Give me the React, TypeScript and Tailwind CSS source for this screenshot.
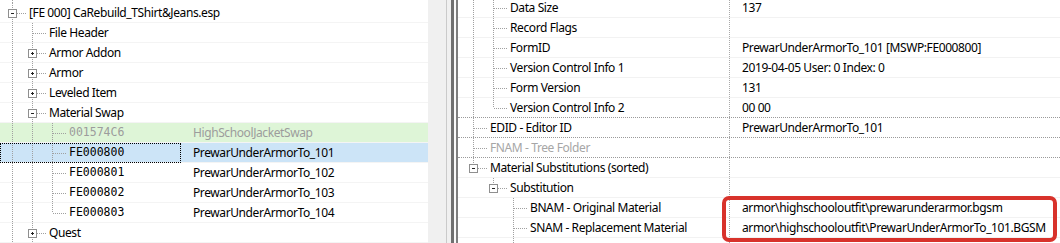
import React from "react";

type Exp = "plus" | "minus" | null;

type Row = {
  lv: number;
  anc: boolean[];
  last?: boolean;
  exp?: Exp;
  name: string;
  value?: string;
  mono?: boolean;
  muted?: boolean;
  tone?: "injected" | "selected";
  line?: "dotted" | "faint";
};

const DOT = "#a0a0a0";

function Guides({ base, row }: { base: number; row: Row }) {
  const cx = (l: number) => base + 20 * l;
  const mid = 10;
  const x = cx(row.lv);
  return (
    <svg width={x + 17} height={20} className="shrink-0" shapeRendering="crispEdges">
      {row.anc.map((on, a) =>
        on ? (
          <line key={a} x1={cx(a) + 0.5} y1={0} x2={cx(a) + 0.5} y2={20} stroke={DOT} strokeDasharray="1 1" />
        ) : null
      )}
      <line x1={x + 0.5} y1={0} x2={x + 0.5} y2={row.last ? mid : 20} stroke={DOT} strokeDasharray="1 1" />
      <line x1={x + 1} y1={mid + 0.5} x2={x + 14} y2={mid + 0.5} stroke={DOT} strokeDasharray="1 1" />
      {row.exp && (
        <g>
          <rect x={x - 3.5} y={mid - 3.5} width={8} height={8} fill="#fff" stroke="#8f8f8f" />
          <line x1={x - 1} y1={mid + 0.5} x2={x + 2} y2={mid + 0.5} stroke="#222" />
          {row.exp === "plus" && <line x1={x + 0.5} y1={mid - 1} x2={x + 0.5} y2={mid + 2} stroke="#222" />}
        </g>
      )}
    </svg>
  );
}

const left: Row[] = [
  { lv: 0, anc: [], exp: "minus", name: "[FE 000] CaRebuild_TShirt&Jeans.esp" },
  { lv: 1, anc: [true], name: "File Header" },
  { lv: 1, anc: [true], exp: "plus", name: "Armor Addon" },
  { lv: 1, anc: [true], exp: "plus", name: "Armor" },
  { lv: 1, anc: [true], exp: "plus", name: "Leveled Item" },
  { lv: 1, anc: [true], exp: "minus", name: "Material Swap" },
  { lv: 2, anc: [true, true], name: "001574C6", value: "HighSchoolJacketSwap", mono: true, muted: true, tone: "injected" },
  { lv: 2, anc: [true, true], name: "FE000800", value: "PrewarUnderArmorTo_101", mono: true, tone: "selected" },
  { lv: 2, anc: [true, true], name: "FE000801", value: "PrewarUnderArmorTo_102", mono: true },
  { lv: 2, anc: [true, true], name: "FE000802", value: "PrewarUnderArmorTo_103", mono: true },
  { lv: 2, anc: [true, true], last: true, name: "FE000803", value: "PrewarUnderArmorTo_104", mono: true },
  { lv: 1, anc: [true], exp: "plus", name: "Quest" },
];

const right: Row[] = [
  { lv: 1, anc: [true], name: "Data Size", value: "137" },
  { lv: 1, anc: [true], name: "Record Flags", value: "" },
  { lv: 1, anc: [true], name: "FormID", value: "PrewarUnderArmorTo_101 [MSWP:FE000800]" },
  { lv: 1, anc: [true], name: "Version Control Info 1", value: "2019-04-05 User: 0 Index: 0" },
  { lv: 1, anc: [true], name: "Form Version", value: "131" },
  { lv: 1, anc: [true], last: true, name: "Version Control Info 2", value: "00 00", line: "dotted" },
  { lv: 0, anc: [], name: "EDID - Editor ID", value: "PrewarUnderArmorTo_101", line: "dotted" },
  { lv: 0, anc: [], name: "FNAM - Tree Folder", value: "", muted: true, line: "dotted" },
  { lv: 0, anc: [], last: true, exp: "minus", name: "Material Substitutions (sorted)" },
  { lv: 1, anc: [false], last: true, exp: "minus", name: "Substitution" },
  { lv: 2, anc: [false, false], name: "BNAM - Original Material", value: "armor\\highschooloutfit\\prewarunderarmor.bgsm" },
  { lv: 2, anc: [false, false], name: "SNAM - Replacement Material", value: "armor\\highschooloutfit\\PrewarUnderArmorTo_101.BGSM" },
  { lv: 2, anc: [false, false], name: "", value: "" },
];

const sans = "font-['Noto_Sans',sans-serif] text-[12px] tracking-[-0.4px]";
const mono = "font-['DejaVu_Sans_Mono',monospace] text-[11.5px]";

function LeftRow({ row }: { row: Row }) {
  const bg =
    row.tone === "injected" ? "bg-[#def5d7]" : row.tone === "selected" ? "bg-[#cce4f7]" : "bg-white";
  return (
    <div className={`flex h-5 items-center border-b border-[#f4f4f4] ${bg}`}>
      <div
        className={`flex h-5 w-[181px] shrink-0 items-center whitespace-nowrap ${
          row.tone === "selected" ? "outline-1 outline-dotted outline-black -outline-offset-1" : ""
        }`}
      >
        <Guides base={12} row={row} />
        <span className={`${row.mono ? mono : sans} ${row.muted ? "text-[#9c9c9c]" : "text-black"}`}>{row.name}</span>
      </div>
      {row.value !== undefined && (
        <span className={`ml-[12px] whitespace-nowrap ${sans} ${row.muted ? "text-[#9c9c9c]" : "text-black"}`}>
          {row.value}
        </span>
      )}
    </div>
  );
}

function RightRow({ row }: { row: Row }) {
  const border = row.line === "dotted" ? "border-dotted border-[#9a9a9a]" : "border-[#f2f2f2]";
  return (
    <div className={`flex h-5 items-stretch border-b ${border}`}>
      <div className="flex w-[272px] shrink-0 items-center whitespace-nowrap border-r border-dotted border-[#a8a8a8]">
        <Guides base={15} row={row} />
        <span className={`${sans} ${row.muted ? "text-[#a6a6a6]" : "text-black"}`}>{row.name}</span>
      </div>
      <div className={`flex items-center whitespace-nowrap pl-[12px] text-black ${sans}`}>{row.value}</div>
    </div>
  );
}

export default function App() {
  return (
    <div className="relative flex h-[243px] w-[1060px] overflow-hidden bg-white">
      <div className="w-[428px] shrink-0 overflow-hidden bg-white pt-[3px]">
        <svg width={20} height={3} className="absolute left-0 top-0" shapeRendering="crispEdges">
          <line x1={12.5} y1={0} x2={12.5} y2={3} stroke={DOT} strokeDasharray="1 1" />
        </svg>
        {left.map((row, i) => (
          <LeftRow key={i} row={row} />
        ))}
      </div>

      <div className="flex w-[30px] shrink-0 bg-[#f0f0f0]">
        <div className="w-[18px]" />
        <div className="w-px bg-[#cacaca]" />
        <div className="w-[4px]" />
        <div className="w-[3px] bg-[#707070]" />
        <div className="w-[2px] bg-[#fafafa]" />
        <div className="w-[2px] bg-[#7e7e7e]" />
      </div>

      <div className="min-w-0 flex-1 overflow-hidden bg-white">
        <div className="-mt-[2px]">
          {right.map((row, i) => (
            <RightRow key={i} row={row} />
          ))}
        </div>
      </div>

      <div className="pointer-events-none absolute left-[722px] top-[196px] h-[46px] w-[335px] rounded-[7px] border-4 border-[#d8322b]" />
    </div>
  );
}
